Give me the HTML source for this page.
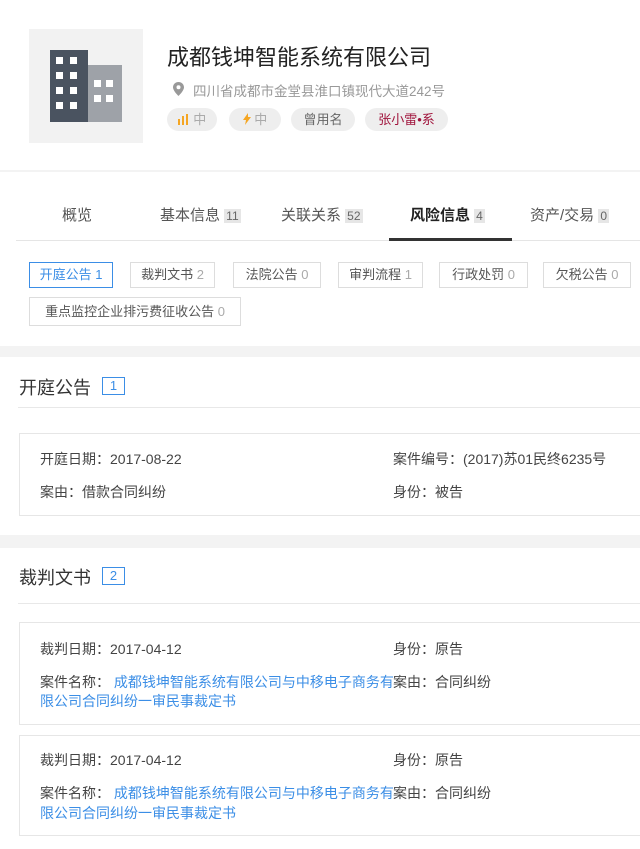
<!DOCTYPE html>
<html><head><meta charset="utf-8"><style>
*{margin:0;padding:0;box-sizing:border-box}
body{width:640px;height:849px;overflow:hidden;background:#f3f3f3;font-family:"Liberation Sans","Noto Sans CJK SC",sans-serif;color:#333;position:relative}
.a{position:absolute;white-space:nowrap}
.w{position:absolute;background:#fff;left:0;width:640px}
.tag{position:absolute;top:108px;height:23px;border-radius:12px;background:#eee;font-size:13px;line-height:23px;text-align:center;color:#666}
.tab{position:absolute;top:204px;font-size:15px;color:#555}
.tab b{font-weight:normal;background:#e6e6e6;font-size:12px;padding:0 2px;color:#666}
.f{position:absolute;height:26px;border:1px solid #ddd;font-size:13px;line-height:24px;color:#555;text-align:center}
.f span{color:#aaa}
.st{position:absolute;left:19px;font-size:18px;color:#333}
.bd{position:absolute;left:102px;width:23px;height:18px;border:1px solid #3b8ee6;color:#3b8ee6;font-size:13px;line-height:16px;text-align:center}
.hl{position:absolute;left:18px;right:0;height:1px;background:#e8e8e8}
.box{position:absolute;left:19px;right:-2px;border:1px solid #e6e6e6;background:#fff}
.t{position:absolute;font-size:14px;color:#444;white-space:nowrap}
.lk{color:#3b8ee6}
</style></head><body>
<div class="w" style="top:0;height:170px"></div>
<div class="a" style="left:29px;top:29px;width:114px;height:114px;background:#f2f2f2"></div>
<svg class="a" style="left:50px;top:50px" width="73" height="72" viewBox="0 0 73 72">
<rect x="0" y="0" width="38" height="72" fill="#4a5360"/>
<rect x="38" y="15" width="34" height="57" fill="#9ea2a8"/>
<g fill="#fff"><rect x="6" y="7" width="7" height="7"/><rect x="20" y="7" width="7" height="7"/><rect x="6" y="22" width="7" height="7"/><rect x="20" y="22" width="7" height="7"/><rect x="6" y="37" width="7" height="7"/><rect x="20" y="37" width="7" height="7"/><rect x="6" y="52" width="7" height="7"/><rect x="20" y="52" width="7" height="7"/>
<rect x="44" y="30" width="7" height="7"/><rect x="56" y="30" width="7" height="7"/><rect x="44" y="45" width="7" height="7"/><rect x="56" y="45" width="7" height="7"/></g></svg>
<div class="a" style="left:167px;top:40px;font-size:22px;color:#222">成都钱坤智能系统有限公司</div>
<svg class="a" style="left:173px;top:82px" width="11" height="14" viewBox="0 0 11 14"><path d="M5.5 0C2.5 0 0 2.3 0 5.3 0 9 5.5 14 5.5 14S11 9 11 5.3C11 2.3 8.5 0 5.5 0zm0 7.3a2 2 0 110-4 2 2 0 010 4z" fill="#999"/></svg>
<div class="a" style="left:193px;top:80px;font-size:13.5px;color:#999">四川省成都市金堂县淮口镇现代大道242号</div>
<div class="tag" style="left:167px;width:50px;color:#aaa"><svg width="12" height="11" viewBox="0 0 12 11" style="vertical-align:-1px"><rect x="0" y="5" width="2" height="6" fill="#f5a623"/><rect x="4" y="2" width="2" height="9" fill="#f5a623"/><rect x="8" y="0" width="2" height="11" fill="#f5a623"/></svg> 中</div>
<div class="tag" style="left:229px;width:52px;color:#aaa"><svg width="8" height="12" viewBox="0 0 8 12" style="vertical-align:-1px"><path d="M5 0L0 7h3l-1 5 6-8H5z" fill="#f5a623"/></svg> 中</div>
<div class="tag" style="left:291px;width:64px">曾用名</div>
<div class="tag" style="left:365px;width:83px;color:#a0143c">张小雷•系</div>
<div class="w" style="top:172px;height:174px"></div>
<div class="tab" style="left:62px">概览</div>
<div class="tab" style="left:160px">基本信息 <b>11</b></div>
<div class="tab" style="left:281px">关联关系 <b>52</b></div>
<div class="tab" style="left:410px;color:#222;font-weight:bold">风险信息 <b>4</b></div>
<div class="tab" style="left:530px">资产/交易 <b>0</b></div>
<div class="a" style="left:16px;top:240px;width:624px;height:1px;background:#e5e5e5"></div>
<div class="a" style="left:389px;top:238px;width:123px;height:3px;background:#333"></div>
<div class="f" style="left:29px;top:262px;width:84px;border-color:#3b8ee6;color:#3b8ee6">开庭公告 1</div>
<div class="f" style="left:130px;top:262px;width:85px">裁判文书 <span>2</span></div>
<div class="f" style="left:233px;top:262px;width:88px">法院公告 <span>0</span></div>
<div class="f" style="left:338px;top:262px;width:85px">审判流程 <span>1</span></div>
<div class="f" style="left:439px;top:262px;width:89px">行政处罚 <span>0</span></div>
<div class="f" style="left:543px;top:262px;width:88px">欠税公告 <span>0</span></div>
<div class="f" style="left:29px;top:297px;width:212px;height:29px;line-height:27px">重点监控企业排污费征收公告 <span>0</span></div>

<div class="w" style="top:357px;height:178px"></div>
<div class="st" style="top:374px">开庭公告</div><div class="bd" style="top:377px">1</div>
<div class="hl" style="top:407px"></div>
<div class="box" style="top:433px;height:83px"></div>
<div class="t" style="left:40px;top:449px">开庭日期：2017-08-22</div>
<div class="t" style="left:393px;top:449px">案件编号：(2017)苏01民终6235号</div>
<div class="t" style="left:40px;top:482px">案由：借款合同纠纷</div>
<div class="t" style="left:393px;top:482px">身份：被告</div>

<div class="w" style="top:548px;height:301px"></div>
<div class="st" style="top:564px">裁判文书</div><div class="bd" style="top:567px">2</div>
<div class="hl" style="top:603px"></div>
<div class="box" style="top:622px;height:103px"></div>
<div class="t" style="left:40px;top:639px">裁判日期：2017-04-12</div>
<div class="t" style="left:393px;top:639px">身份：原告</div>
<div class="t" style="left:40px;top:672px">案件名称： <span class="lk">成都钱坤智能系统有限公司与中移电子商务有</span></div>
<div class="t" style="left:393px;top:672px">案由：合同纠纷</div>
<div class="t lk" style="left:40px;top:691px">限公司合同纠纷一审民事裁定书</div>
<div class="box" style="top:735px;height:101px"></div>
<div class="t" style="left:40px;top:750px">裁判日期：2017-04-12</div>
<div class="t" style="left:393px;top:750px">身份：原告</div>
<div class="t" style="left:40px;top:783px">案件名称： <span class="lk">成都钱坤智能系统有限公司与中移电子商务有</span></div>
<div class="t" style="left:393px;top:783px">案由：合同纠纷</div>
<div class="t lk" style="left:40px;top:803px">限公司合同纠纷一审民事裁定书</div>
</body></html>
